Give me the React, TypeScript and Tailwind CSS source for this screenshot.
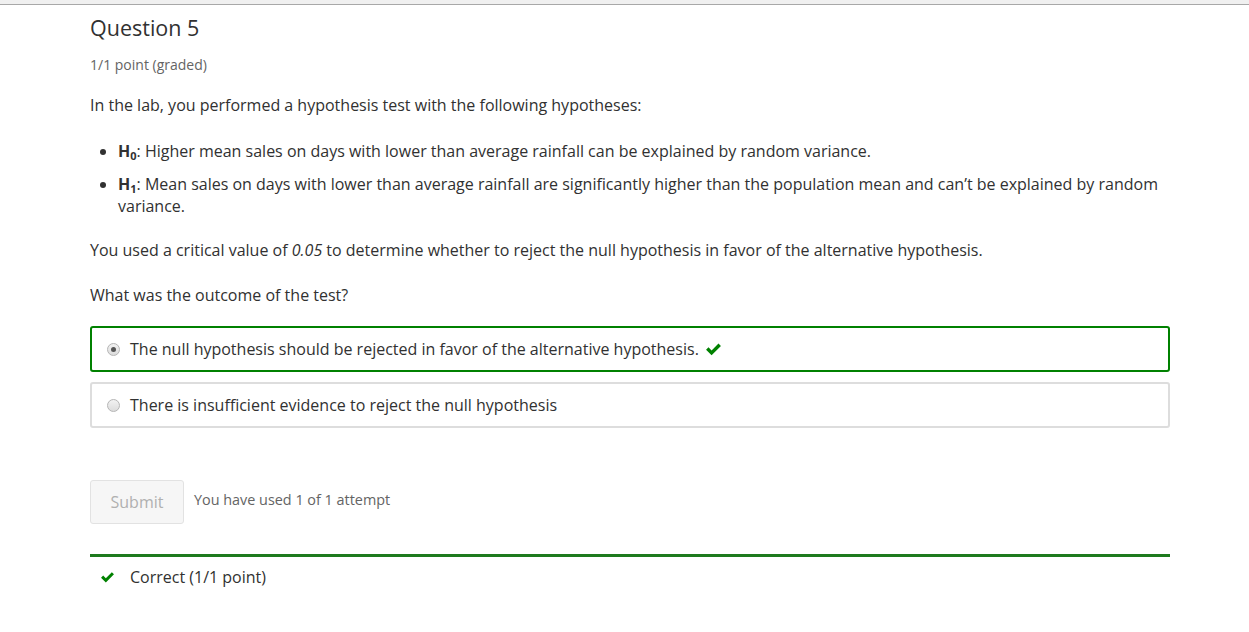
import React from "react";

const Check = ({ className }: { className?: string }) => (
  <svg viewBox="0 0 16 13" className={className} fill="#008100">
    <path d="M1 7.2 L3.3 4.9 L6.2 7.8 L12.7 1.3 L15 3.6 L6.2 12.4 Z" />
  </svg>
);

const Radio = ({ checked }: { checked?: boolean }) => (
  <span className="inline-flex h-[13px] w-[13px] shrink-0 items-center justify-center rounded-full border border-[#b5b5b5] bg-gradient-to-b from-[#f2f2f2] to-[#dcdcdc]">
    {checked && <span className="h-[5px] w-[5px] rounded-full bg-[#555]" />}
  </span>
);

const Sub = ({ children }: { children: React.ReactNode }) => (
  <span className="relative top-[3px] text-[11px] leading-none">{children}</span>
);

export default function App() {
  return (
    <div className="min-h-[632px] bg-white text-[#313131]" style={{ fontFamily: '"Open Sans", "Liberation Sans", sans-serif' }}>
      <div className="h-[4px] bg-[#f0f0f0]" />
      <div className="h-[1px] bg-[#a8a8a8]" />
      <div className="ml-[90px] w-[1080px] pt-[8px]">
        <h2 className="text-[21.5px] leading-[30px] font-normal text-[#313131]">Question 5</h2>
        <div className="mt-[13px] text-[14px] leading-[18px] text-[#646464]">1/1 point (graded)</div>
        <p className="mt-[20px] text-[16px] leading-[22px]">In the lab, you performed a hypothesis test with the following hypotheses:</p>
        <ul className="mt-[24px] list-disc pl-[28px] text-[16px] leading-[22px]">
          <li className="mb-[11px]"><b>H<Sub>0</Sub></b>: Higher mean sales on days with lower than average rainfall can be explained by random variance.</li>
          <li><b>H<Sub>1</Sub></b>: Mean sales on days with lower than average rainfall are significantly higher than the population mean and can’t be explained by random variance.</li>
        </ul>
        <p className="mt-[22px] text-[16px] leading-[22px]">You used a critical value of <i>0.05</i> to determine whether to reject the null hypothesis in favor of the alternative hypothesis.</p>
        <p className="mt-[23px] text-[16px] leading-[22px]">What was the outcome of the test?</p>
        <div className="mt-[20px] flex flex-col gap-[10px]">
          <div className="flex h-[46px] items-center gap-[10px] rounded-[3px] border-2 border-[#008100] pl-[15px] text-[16px]">
            <Radio checked />
            <span>The null hypothesis should be rejected in favor of the alternative hypothesis.</span>
            <Check className="-ml-[4px] h-[14px] w-[17px]" />
          </div>
          <div className="flex h-[46px] items-center gap-[10px] rounded-[3px] border-2 border-[#dddddd] pl-[15px] text-[16px]">
            <Radio />
            <span>There is insufficient evidence to reject the null hypothesis</span>
          </div>
        </div>
        <div className="mt-[52px] flex items-center gap-[10px]">
          <div className="flex h-[44px] w-[94px] items-center justify-center rounded-[3px] border border-[#e2e2e2] bg-[#f6f6f6] text-[16px] text-[#b0b0b0]">Submit</div>
          <span className="text-[14.4px] text-[#646464] -mt-[4px]">You have used 1 of 1 attempt</span>
        </div>
        <div className="mt-[30px] h-[3px] bg-[#1e7a1e]" />
        <div className="mt-[8px] flex items-center gap-[15px] pl-[10px] text-[16px]">
          <Check className="h-[12px] w-[15px]" />
          <span>Correct (1/1 point)</span>
        </div>
      </div>
    </div>
  );
}
